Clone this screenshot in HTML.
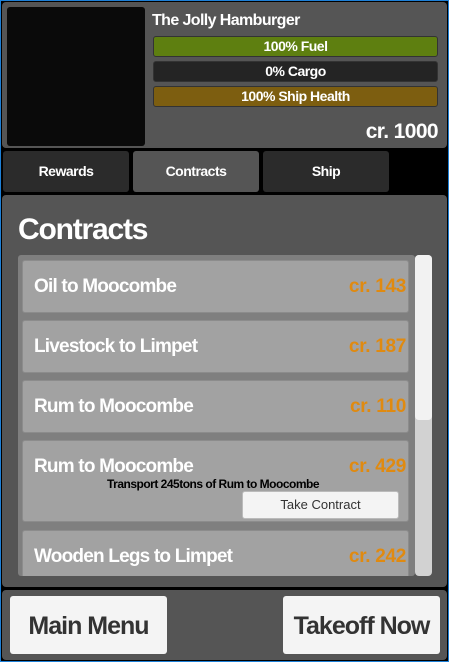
<!DOCTYPE html>
<html><head><style>
*{margin:0;padding:0;box-sizing:border-box}
body{width:449px;height:662px;background:#000;position:relative;overflow:hidden;font-family:"Liberation Sans",sans-serif;font-weight:bold}
.a{position:absolute}
.p{background:#555;border-radius:4px}
.t{color:#fff;letter-spacing:-0.6px;white-space:nowrap}
.bar{position:absolute;left:153px;width:285px;height:21px;border-radius:3px;border:1px solid #333;color:#fff;text-align:center;font-size:14px;line-height:19px;letter-spacing:-0.5px}
.tab{position:absolute;top:151px;height:41px;width:126px;background:#2b2b2b;border-radius:3px;color:#fff;text-align:center;line-height:41px;font-size:14px;letter-spacing:-0.5px}
.it{position:absolute;left:22px;width:387px;background:#a2a2a2;border:1px solid #8c8c8c;border-radius:3px}
.it .n{position:absolute;left:11px;top:15px;color:#fff;font-size:19px;letter-spacing:-0.8px;white-space:nowrap}
.it .c{position:absolute;right:2px;top:15px;color:#e08a10;font-size:19px;letter-spacing:-0.3px}
.btn{position:absolute;top:596px;width:157px;height:58px;background:#f4f4f4;border-radius:3px;color:#333;font-size:25px;text-align:center;line-height:60px;letter-spacing:-1px}
</style></head><body>
<div class="a p" style="left:2px;top:2px;width:445px;height:146px"></div>
<div class="a" style="left:7px;top:7px;width:138px;height:139px;background:#0a0a0a;border-radius:3px"></div>
<div class="a t" style="left:152px;top:12px;font-size:16px">The Jolly Hamburger</div>
<div class="bar" style="top:36px;background:#5e7f10">100% Fuel</div>
<div class="bar" style="top:61px;background:#242424">0% Cargo</div>
<div class="bar" style="top:86px;background:#7d5e10">100% Ship Health</div>
<div class="a t" style="right:11px;top:120px;font-size:21px">cr. 1000</div>
<div class="tab" style="left:3px">Rewards</div>
<div class="tab" style="left:133px;background:#555">Contracts</div>
<div class="tab" style="left:263px">Ship</div>
<div class="a p" style="left:2px;top:195px;width:445px;height:392px"></div>
<div class="a t" style="left:18px;top:213px;font-size:30px;letter-spacing:-1.2px">Contracts</div>
<div class="a" style="left:18px;top:255px;width:397px;height:321px;background:#7f7f7f;border-radius:3px"></div>
<div class="a" style="left:415px;top:255px;width:17px;height:321px;background:#d2d2d2;border-radius:4px"></div>
<div class="a" style="left:415px;top:255px;width:17px;height:165px;background:#f2f2f2;border-radius:4px"></div>
<div class="a" style="left:18px;top:255px;width:397px;height:321px;overflow:hidden">
<div class="it" style="top:5px;height:53px;left:4px"><span class="n">Oil to Moocombe</span><span class="c">cr. 143</span></div>
<div class="it" style="top:65px;height:53px;left:4px"><span class="n">Livestock to Limpet</span><span class="c">cr. 187</span></div>
<div class="it" style="top:125px;height:53px;left:4px"><span class="n">Rum to Moocombe</span><span class="c">cr. 110</span></div>
<div class="it" style="top:185px;height:82px;left:4px"><span class="n">Rum to Moocombe</span><span class="c">cr. 429</span>
<span class="a" style="left:84px;top:36px;font-size:12px;color:#000;letter-spacing:-0.5px;white-space:nowrap">Transport 245tons of Rum to Moocombe</span>
<span class="a" style="left:219px;top:50px;width:157px;height:28px;background:#f4f4f4;border:1px solid #bbb;border-radius:3px;font-weight:normal;font-size:13px;color:#333;text-align:center;line-height:26px">Take Contract</span></div>
<div class="it" style="top:275px;height:60px;left:4px"><span class="n">Wooden Legs to Limpet</span><span class="c">cr. 242</span></div>
</div>
<div class="a p" style="left:2px;top:590px;width:445px;height:70px"></div>
<div class="btn" style="left:10px">Main Menu</div>
<div class="btn" style="left:283px">Takeoff Now</div>
<div class="a" style="left:0;top:0;width:449px;height:662px;border:1px solid #1d7fd6"></div>
</body></html>
